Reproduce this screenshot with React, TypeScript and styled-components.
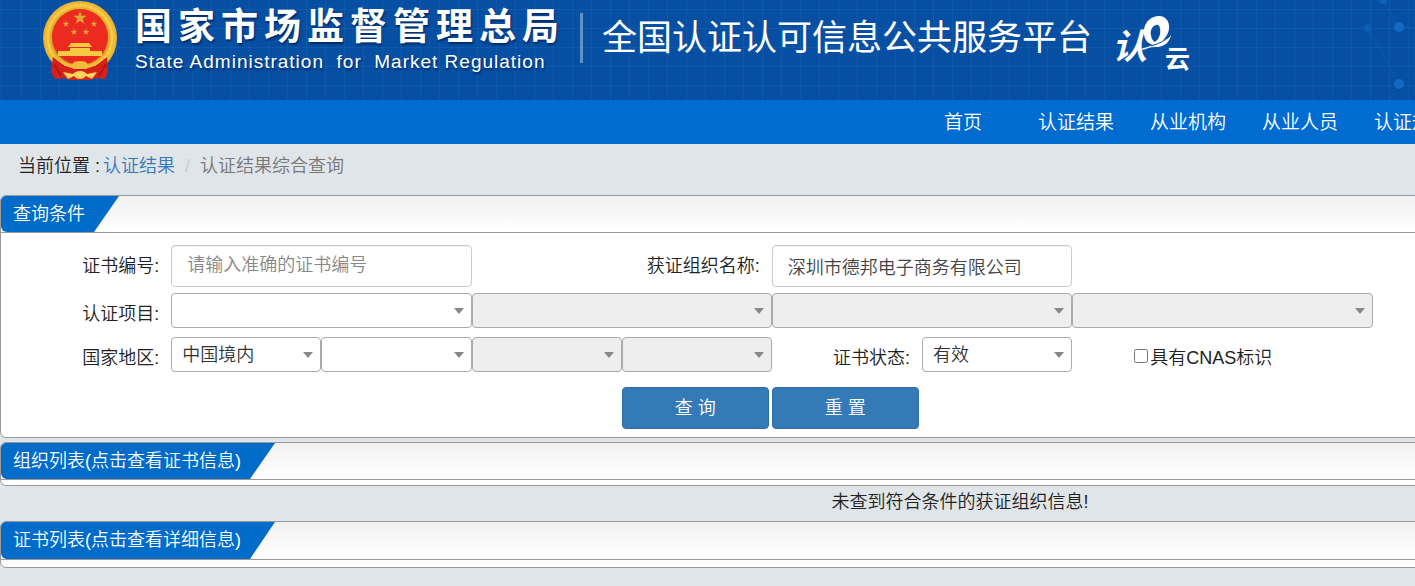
import React from 'react';
import styled, { createGlobalStyle, css } from 'styled-components';

const GlobalStyle = createGlobalStyle`
  *, *::before, *::after { box-sizing: border-box; }
  body {
    margin: 0;
    background: #e0e5e9;
    color: #222;
    font-family: "Liberation Sans", "Noto Sans CJK SC", sans-serif;
    font-size: 18px;
    font-weight: 350;
    line-height: 24px;
  }
  input, select, button { font: inherit; color: inherit; }
`;

const Viewport = styled.div`
  width: 100%;
  overflow: hidden;
`;

const Page = styled.div`
  min-width: 1920px;
`;

const Banner = styled.header`
  position: relative;
  display: flex;
  align-items: flex-start;
  height: 100px;
  padding-left: 42px;
  color: #fff;
  background:
    repeating-linear-gradient(90deg, transparent 0 18px, rgba(60, 140, 215, 0.16) 18px 19px) 3px 0,
    repeating-linear-gradient(180deg, transparent 0 18px, rgba(60, 140, 215, 0.16) 18px 19px) 0 -9px,
    #064fa2;
`;

const Constellation = styled.svg`
  position: absolute;
  left: 1355px;
  top: 0;
`;

const Emblem = styled.svg`
  flex: none;
  width: 76px;
  height: 82px;
`;

const Agency = styled.div`
  display: flex;
  flex-direction: column;
  width: 444px;
  padding: 8px 0 0 17px;
  text-shadow: 1px 2px 2px rgba(0, 20, 70, 0.6);
  white-space: pre;
`;

const AgencyName = styled.strong`
  font-size: 37px;
  font-weight: 700;
  line-height: 40px;
  letter-spacing: 6px;
`;

const AgencyEnglish = styled.span`
  padding-top: 4px;
  font-size: 19px;
  font-weight: 400;
  line-height: 20px;
  letter-spacing: 1px;
`;

const PlatformName = styled.h1`
  margin: 13px 0 0 18px;
  padding-left: 19px;
  border-left: 3px solid #5f90c8;
  font-size: 35px;
  font-weight: 400;
  line-height: 50px;
  white-space: nowrap;
`;

const CloudLogo = styled.svg`
  flex: none;
  width: 90px;
  height: 68px;
  margin: 8px 0 0 13px;
`;

const Nav = styled.nav`
  display: flex;
  align-items: center;
  gap: 36px;
  height: 44px;
  padding: 2px 0 0 944px;
  background: #006ccf;
`;

const NavLink = styled.a<{ $home?: boolean }>`
  color: #fff;
  font-size: 19px;
  text-decoration: none;
  white-space: nowrap;
  ${(p) => p.$home && css`margin-right: 20px;`}
`;

const Breadcrumb = styled.nav`
  display: flex;
  height: 51px;
  padding: 10px 18px;
  color: #777;
`;

const Place = styled.span`
  margin-right: 3px;
  color: #222;
`;

const CrumbLink = styled.a`
  color: #337ab7;
  text-decoration: none;
`;

const Divider = styled.span`
  padding: 0 10px;
  color: #ccc;
`;

const Panel = styled.section`
  overflow: hidden;
  border: 1px solid #999;
  border-radius: 6px;
  background: #fff;
`;

const PanelHead = styled.div<{ $tall?: boolean }>`
  display: flex;
  height: ${(p) => (p.$tall ? 38 : 37)}px;
  border-bottom: 1px solid #999;
  background: linear-gradient(#f1f1f1, #fff);
`;

const Tab = styled.h2`
  margin: 0;
  padding: 0 34px 0 12px;
  border-radius: 0 0 0 6px;
  background: #006cc9;
  clip-path: polygon(0 0, 100% 0, calc(100% - 25px) 100%, 0 100%);
  color: #fff;
  font-size: 18px;
  font-weight: 350;
  line-height: 36px;
`;

const PanelSpace = styled.div<{ $tall?: boolean }>`
  height: ${(p) => (p.$tall ? 7 : 5)}px;
`;

const QueryForm = styled.form`
  display: grid;
  grid-template-columns: repeat(12, minmax(0, 1fr));
  align-content: start;
  width: 1802px;
  min-height: 204px;
  margin-left: 20px;
  padding: 12px 0 8px;
`;

const Label = styled.label<{ $span?: number; $first?: boolean }>`
  grid-column: ${(p) => (p.$first ? '1 / ' : '')}span ${(p) => p.$span ?? 1};
  padding: 9px 12px 0 0;
  text-align: right;
  white-space: nowrap;
`;

const TextInput = styled.input`
  grid-column: span 2;
  width: 100%;
  height: 42px;
  margin-bottom: 6px;
  padding: 0 15px 1px;
  border: 1px solid #ccc;
  border-radius: 4px;
  background: #fff;
  box-shadow: inset 0 1px 1px rgba(0, 0, 0, 0.075);
  color: #444;
  &::placeholder { color: #888; opacity: 1; }
`;

const SelectBox = styled.div<{ $span?: number }>`
  position: relative;
  grid-column: span ${(p) => p.$span ?? 1};
  height: 35px;
  margin-bottom: 9px;
  &::after {
    content: "";
    position: absolute;
    right: 8px;
    top: 15px;
    border: 5px solid transparent;
    border-top: 6px solid #888;
    border-bottom: 0;
    pointer-events: none;
  }
`;

const Select = styled.select`
  appearance: none;
  display: block;
  width: 100%;
  height: 35px;
  padding: 0 20px 0 10px;
  border: 1px solid #aaa;
  border-radius: 4px;
  background: #fff;
  color: #333;
  opacity: 1;
  &:disabled { background: #eee; }
`;

const CheckLabel = styled.label`
  grid-column: 8 / span 3;
  display: flex;
  align-items: flex-start;
  gap: 2px;
  padding: 9px 0 0 62px;
`;

const Checkbox = styled.input`
  width: 14px;
  height: 14px;
  margin: 3px 0 0;
`;

const Actions = styled.div`
  grid-column: 5 / span 4;
  display: flex;
  gap: 3px;
  padding-top: 6px;
`;

const Button = styled.button`
  width: 147px;
  height: 42px;
  padding: 0 0 1px;
  border: 1px solid #2e6da4;
  border-radius: 4px;
  background: #337ab7;
  color: #fff;
`;

const Gap = styled.div`
  height: 4px;
`;

const Message = styled.p`
  height: 35px;
  margin: 0;
  padding-top: 4px;
  text-align: center;
`;

const star = (cx: number, cy: number, r: number) =>
  Array.from({ length: 10 }, (_, i) => {
    const a = (Math.PI * i) / 5 - Math.PI / 2;
    const d = i % 2 ? r * 0.4 : r;
    return `${(cx + d * Math.cos(a)).toFixed(2)},${(cy + d * Math.sin(a)).toFixed(2)}`;
  }).join(' ');

function NationalEmblem() {
  return (
    <Emblem viewBox="0 0 76 82" role="img" aria-label="国徽">
      <defs>
        <radialGradient id="gold">
          <stop offset="0.76" stopColor="#d99a22" />
          <stop offset="0.86" stopColor="#f8c83f" />
          <stop offset="1" stopColor="#e9ad2e" />
        </radialGradient>
      </defs>
      <circle cx="38" cy="38" r="37" fill="url(#gold)" />
      <circle cx="38" cy="37" r="32" fill="none" stroke="#ffdc67" strokeWidth="2" strokeDasharray="3 2" opacity="0.4" />
      <circle cx="38" cy="37" r="28" fill="#eb2a20" />
      <polygon points={star(38, 18, 7)} fill="#e3a436" />
      <polygon points={star(24, 24, 3.5)} fill="#e3a436" />
      <polygon points={star(52, 24, 3.5)} fill="#e3a436" />
      <polygon points={star(32, 32, 3.5)} fill="#e3a436" />
      <polygon points={star(44, 32, 3.5)} fill="#e3a436" />
      <path d="M29 43h18l3 4H26zM28 48h20v3H28zM16 51h44v5H16z" fill="#f8c943" />
      <path d="M20 57h36l-8 6H28z" fill="#e8281f" />
      <path d="M11 57l12 9 15 1 15-1 12-9 1 15-3 7-9-1-6 2H28l-6-2-9 1-4-7z" fill="#d8201b" />
      <path d="M14 55c6 7 13 10 24 11 11-1 18-4 24-11l-1 5c-7 6-14 9-23 9s-16-3-23-9z" fill="#f4bc38" />
      <path d="M12 64l7 12M64 64l-7 12" stroke="#a91414" strokeWidth="1.5" />
      <path d="M30 65c2-5 5-3 8-4 3 1 6-1 8 4l5-1-7 5H32l-7-5z" fill="#f4bc38" />
      <path d="M21 72l10 2c3-4 11-4 14 0l10-2-5 7-6-3c-3 4-9 4-12 0l-6 3z" fill="#ffd45b" />
    </Emblem>
  );
}

function RenyunLogo() {
  return (
    <CloudLogo viewBox="0 0 90 68" role="img" aria-label="认e云" fill="#fff">
      <text x="7" y="51" fontSize="35" fontWeight="700" fontStyle="italic" fontFamily="Noto Sans CJK SC, sans-serif">认</text>
      <path fillRule="evenodd" d="M54 8C61 8 65 14 64 21C63 28 58 33 52 36L49 37C42 36 38 30 39 22C40 13 47 8 54 8ZM51 17C47 18 45 23 46 27C46 30 48 33 50 34C54 31 56 26 55 21C55 18 53 16 51 17Z" />
      <path d="M34 41C43 40 52 35 58 32C62 31 65 29 66 27C65 34 59 39 52 39C48 39 45 39 41 41C39 42 36 42 34 41Z" />
      <path d="M46 38C53 36 60 33 65 28" fill="none" stroke="#064fa2" />
      <text x="60" y="60" fontSize="25" fontWeight="700" fontFamily="Noto Sans CJK SC, sans-serif">云</text>
    </CloudLogo>
  );
}

interface DropdownProps {
  id?: string;
  label?: string;
  span?: number;
  value?: string;
  disabled?: boolean;
}

function Dropdown({ id, label, span, value = '', disabled }: DropdownProps) {
  return (
    <SelectBox $span={span}>
      <Select id={id} aria-label={label} disabled={disabled} defaultValue={value}>
        <option value={value}>{value}</option>
      </Select>
    </SelectBox>
  );
}

export default function App() {
  return (
    <Viewport>
      <GlobalStyle />
      <Page>
        <Banner>
          <NationalEmblem />
          <Agency>
            <AgencyName>国家市场监督管理总局</AgencyName>
            <AgencyEnglish>State Administration  for  Market Regulation</AgencyEnglish>
          </Agency>
          <PlatformName>全国认证认可信息公共服务平台</PlatformName>
          <RenyunLogo />
          <Constellation width="60" height="100" viewBox="0 0 60 100" aria-hidden="true">
            <path d="M28 0L44 27M13 28l31 56-10 16M44 27h16" stroke="#1266c4" opacity="0.5" fill="none" />
            <g fill="#1269bf">
              <circle cx="28" cy="0" r="4" opacity="0.7" />
              <circle cx="44" cy="27" r="5" />
              <circle cx="13" cy="28" r="4" opacity="0.5" />
              <circle cx="44" cy="84" r="5" />
            </g>
          </Constellation>
        </Banner>

        <Nav aria-label="主导航">
          <NavLink href="#home" $home>首页</NavLink>
          <NavLink href="#results">认证结果</NavLink>
          <NavLink href="#agencies">从业机构</NavLink>
          <NavLink href="#people">从业人员</NavLink>
          <NavLink href="#rules">认证规则</NavLink>
        </Nav>

        <Breadcrumb aria-label="当前位置">
          <Place>当前位置 :</Place>
          <CrumbLink href="#results">认证结果</CrumbLink>
          <Divider>/</Divider>
          <span>认证结果综合查询</span>
        </Breadcrumb>

        <Panel>
          <PanelHead><Tab>查询条件</Tab></PanelHead>
          <QueryForm onSubmit={(e) => e.preventDefault()}>
            <Label htmlFor="cert-no" $first>证书编号:</Label>
            <TextInput id="cert-no" placeholder="请输入准确的证书编号" />
            <Label htmlFor="org-name" $span={2}>获证组织名称:</Label>
            <TextInput id="org-name" defaultValue="深圳市德邦电子商务有限公司" />

            <Label htmlFor="project" $first>认证项目:</Label>
            <Dropdown id="project" span={2} />
            <Dropdown label="认证项目二级" span={2} disabled />
            <Dropdown label="认证项目三级" span={2} disabled />
            <Dropdown label="认证项目四级" span={2} disabled />

            <Label htmlFor="region" $first>国家地区:</Label>
            <Dropdown id="region" value="中国境内" />
            <Dropdown label="省" />
            <Dropdown label="市" disabled />
            <Dropdown label="区县" disabled />
            <Label htmlFor="status">证书状态:</Label>
            <Dropdown id="status" value="有效" />
            <CheckLabel>
              <Checkbox type="checkbox" />
              具有CNAS标识
            </CheckLabel>

            <Actions>
              <Button type="submit">查 询</Button>
              <Button type="reset">重 置</Button>
            </Actions>
          </QueryForm>
        </Panel>
        <Gap />
        <Panel>
          <PanelHead><Tab>组织列表(点击查看证书信息)</Tab></PanelHead>
          <PanelSpace />
        </Panel>
        <Message>未查到符合条件的获证组织信息!</Message>
        <Panel>
          <PanelHead $tall><Tab>证书列表(点击查看详细信息)</Tab></PanelHead>
          <PanelSpace $tall />
        </Panel>
      </Page>
    </Viewport>
  );
}
